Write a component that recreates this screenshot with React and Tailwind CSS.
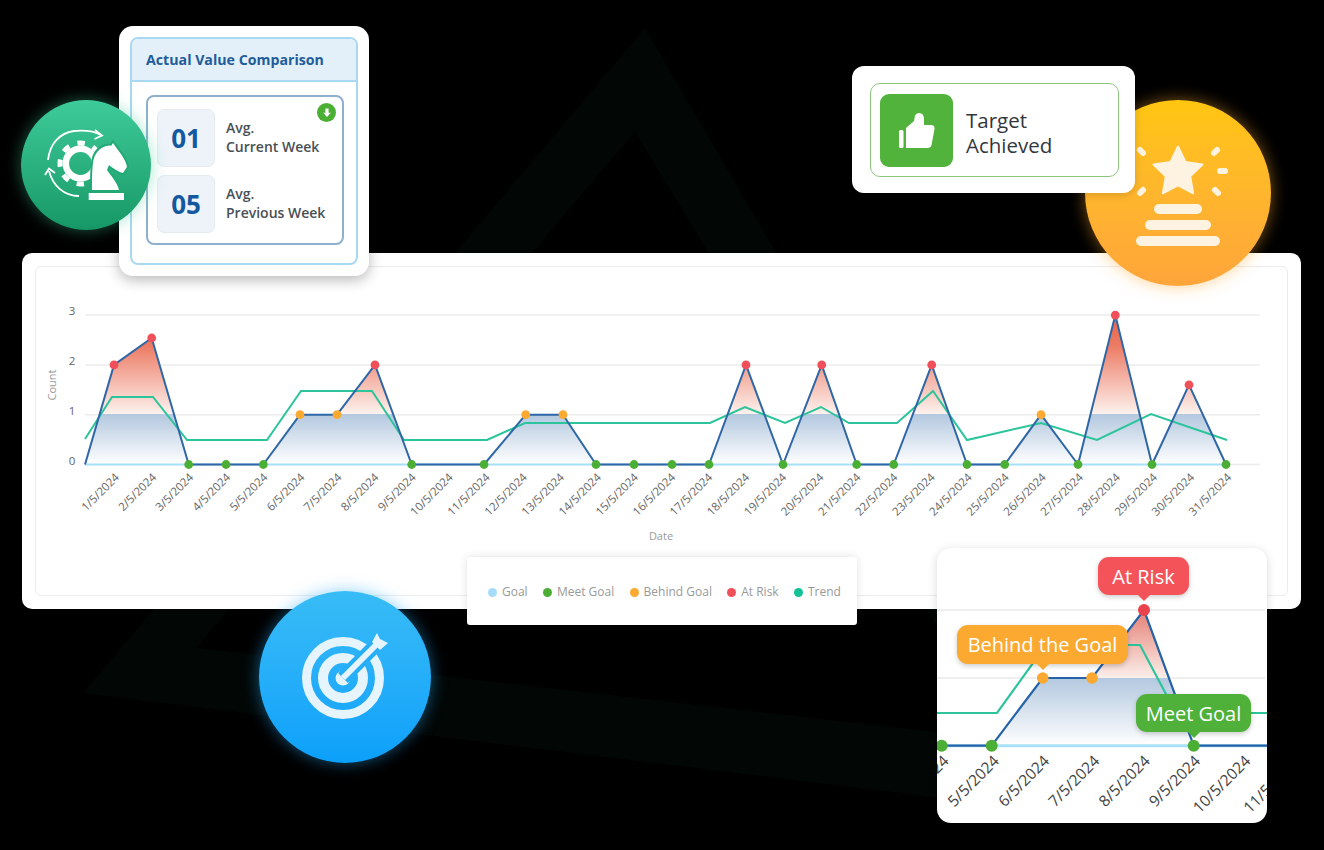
import React from "react";

// x positions of the markers, they are not perfectly even in the chart
const xs = [114, 151.7, 188.7, 226, 263.3, 300, 337, 375, 411.7, 448, 484, 525.7, 563, 596, 634, 672, 709, 746, 783, 821.7, 856.7, 893.7, 931.7, 967, 1004.7, 1041, 1078, 1115.3, 1152, 1189, 1226];
const values = [2, 2.54, 0, 0, 0, 1, 1, 2, 0, 0, 0, 1, 1, 0, 0, 0, 0, 2, 0, 2, 0, 0, 2, 0, 0, 1, 0, 3, 0, 1.6, 0];
const trend = "85,439 112,397 153,397 187,440 267,440 301,391 372,391 404,440 487,440 525,423 710,423 745,407 785,423 821,407 849,423 897,423 933,391 967,440 1041,423 1097,440 1151,414 1227,440";

const toY = (v) => 464.5 - v * 49.8;
const dotColor = (v) => (v === 0 ? "#4caf35" : v === 1 ? "#fba931" : "#f0505a");

const linePoints = "85,464.5 " + xs.map((x, i) => `${x},${toY(values[i])}`).join(" ");
const areaPoints = linePoints + " 1226,464.5";

const legend = [
  { label: "Goal", color: "bg-[#a5dcfa]" },
  { label: "Meet Goal", color: "bg-[#4caf35]" },
  { label: "Behind Goal", color: "bg-[#fba931]" },
  { label: "At Risk", color: "bg-[#f0505a]" },
  { label: "Trend", color: "bg-[#12c195]" },
];

function MainChart() {
  return (
    <svg viewBox="36 267 1251 328" className="block w-[1251px] h-[328px]">
      <defs>
        <linearGradient id="areaFill" gradientUnits="userSpaceOnUse" x1="0" y1="315" x2="0" y2="464.5">
          <stop offset="0%" stopColor="#e8654a" />
          <stop offset="20%" stopColor="#ec7a63" />
          <stop offset="66%" stopColor="#fdf1ed" />
          <stop offset="66.4%" stopColor="#b3c8df" />
          <stop offset="100%" stopColor="#ffffff" />
        </linearGradient>
      </defs>
      {[3, 2, 1, 0].map((v) => (
        <g key={v}>
          <line x1="85" x2="1260" y1={toY(v)} y2={toY(v)} stroke="#ececec" strokeWidth="1.5" />
          <text x="72" y={toY(v)} textAnchor="middle" fontSize="11.500" fill="#666">{v}</text>
        </g>
      ))}
      <text transform="translate(56 385) rotate(-90)" textAnchor="middle" fontSize="11" fill="#999">Count</text>
      <polygon points={areaPoints} fill="url(#areaFill)" />
      <line x1="85" x2="1226" y1="464.5" y2="464.5" stroke="#a8e0f8" strokeWidth="2" />
      <polyline points={trend} fill="none" stroke="#2cc49b" strokeWidth="2" />
      <polyline points={linePoints} fill="none" stroke="#2f67a6" strokeWidth="2" strokeLinejoin="round" />
      {xs.map((x, i) =>
        i === 9 ? null : <circle key={i} cx={x} cy={toY(values[i])} r="4.4" fill={dotColor(values[i])} />
      )}
      {xs.map((_, i) => {
        const lx = 120 + i * 37.07;
        return (
          <text key={i} transform={`translate(${lx} 478) rotate(-45)`} textAnchor="end" fontSize="11.500" fill="#666">
            {i + 1}/5/2024
          </text>
        );
      })}
      <text x="661" y="540" textAnchor="middle" fontSize="11" fill="#999">Date</text>
    </svg>
  );
}

function ZoomChart() {
  const days = [4, 5, 6, 7, 8, 9, 10, 11];
  const labelX = (d) => 941.7 + (d - 4) * 50.3;
  const Y = 745.7;
  return (
    <svg viewBox="937 548 330 275" className="block w-[330px] h-[275px]">
      <defs>
        <linearGradient id="zoomFill" gradientUnits="userSpaceOnUse" x1="0" y1="610" x2="0" y2="745.7">
          <stop offset="0%" stopColor="#e57f74" />
          <stop offset="49.8%" stopColor="#fbeee9" />
          <stop offset="50%" stopColor="#b3c8df" />
          <stop offset="100%" stopColor="#ffffff" />
        </linearGradient>
      </defs>
      <line x1="937" x2="1265" y1="610" y2="610" stroke="#dedede" />
      <line x1="937" x2="1265" y1="678" y2="678" stroke="#dedede" />
      <polygon points="991.7,745.7 1042.7,678 1092,678 1144,610 1193.7,745.7" fill="url(#zoomFill)" />
      <line x1="937" x2="1267" y1={Y} y2={Y} stroke="#a8e0f8" strokeWidth="3" />
      <polyline points="937,713 997,713 1046,645 1140,645 1176,713 1267,713" fill="none" stroke="#2cc49b" strokeWidth="2.2" />
      <polyline points={`937,${Y} 991.7,${Y} 1042.7,678 1092,678 1144,610 1193.7,${Y} 1267,${Y}`} fill="none" stroke="#2563a8" strokeWidth="2.2" />
      <circle cx="941.7" cy={Y} r="6" fill="#4caf35" />
      <circle cx="991.7" cy={Y} r="6" fill="#4caf35" />
      <circle cx="1193.7" cy={Y} r="6" fill="#4caf35" />
      <circle cx="1042.7" cy="678" r="5.8" fill="#fba931" />
      <circle cx="1092" cy="678" r="5.8" fill="#fba931" />
      <circle cx="1144" cy="610" r="6" fill="#e9444e" />
      {days.map((d) => (
        <text key={d} transform={`translate(${labelX(d) + 8} 762) rotate(-45)`} textAnchor="end" fontSize="15.5" fill="#444">
          {d}/5/2024
        </text>
      ))}
    </svg>
  );
}

function Callout({ className, pointer, children }) {
  return (
    <div className={`absolute flex items-center justify-center pt-[1px] rounded-[11px] text-[20px] text-white shadow-[0_2px_5px_rgba(0,0,0,0.2)] ${className}`}>
      {children}
      <span className={`absolute -bottom-[6px] left-1/2 -ml-[7px] w-0 h-0 border-x-[7px] border-x-transparent border-t-[7px] ${pointer}`} />
    </div>
  );
}

function StatRow({ value, line1, line2 }) {
  return (
    <div className="flex items-center gap-[11px]">
      <div className="flex items-center justify-center w-[58px] h-[58px] rounded-[7px] bg-[#edf3f9] border border-[#e6ebf0] text-[26px] font-bold text-[#14599f]">
        {value}
      </div>
      <div className="-mt-[3px] text-[14px] leading-[19px] font-semibold text-[#4a4f55]">
        <div>{line1}</div>
        <div>{line2}</div>
      </div>
    </div>
  );
}

function ComparisonCard() {
  return (
    <div className="absolute left-[119px] top-[26px] w-[250px] h-[250px] rounded-[14px] bg-white p-[11px] shadow-[0_4px_14px_rgba(0,0,0,0.28)]">
      <div className="h-full rounded-lg border-2 border-[#a9d8f2] overflow-hidden">
        <div className="flex items-center h-[43px] pl-[14px] pt-[1px] bg-[#e3f0f9] border-b-2 border-[#a9d8f2] text-[14.2px] font-bold text-[#1f5c99]">
          Actual Value Comparison
        </div>
        <div className="pt-[13px] pl-[14px] pr-[12px]">
          <div className="relative flex flex-col gap-2 h-[150px] pt-[12px] pl-[9px] rounded-lg border-2 border-[#8fb0cc]">
            <StatRow value="01" line1="Avg." line2="Current Week" />
            <StatRow value="05" line1="Avg." line2="Previous Week" />
            <div className="absolute right-[6px] top-[6px] flex items-center justify-center w-[19px] h-[19px] rounded-full bg-[#4caf35]">
              <svg viewBox="0 0 12 12" className="w-[12px] h-[12px]">
                <path d="M4.4 1.5h3.2v4.2h2.2L6 10 2.2 5.7h2.2z" fill="#fff" />
              </svg>
            </div>
          </div>
        </div>
      </div>
    </div>
  );
}

function GreenBadge() {
  return (
    <div className="absolute left-[21px] top-[100px] w-[130px] h-[130px] rounded-full bg-gradient-to-b from-[#3ecb9a] to-[#159866] shadow-[0_0_16px_rgba(62,200,153,0.45)]">
      <svg viewBox="21 100 130 130" className="w-[130px] h-[130px]">
        <path d="M48 160C50 143 60 133 74 131C85 130 94 131 101 135" fill="none" stroke="#fff" strokeWidth="1.8" />
        <path d="M95 130l7 5.500-7.500 3.500" fill="none" stroke="#fff" strokeWidth="1.8" />
        <path d="M79 196C64 196 53 186 49 171" fill="none" stroke="#fff" strokeWidth="1.8" />
        <path d="M45 175l4-6.500 6 4.500" fill="none" stroke="#fff" strokeWidth="1.8" />
        <circle cx="80.5" cy="163.500" r="14.700" fill="none" stroke="#fff" strokeWidth="6.500" />
        <circle cx="80.5" cy="163.500" r="20.500" fill="none" stroke="#fff" strokeWidth="5" strokeDasharray="7.500 8.600" strokeDashoffset="3.750" />
        <path d="M113 143L118 150C122 155 126 161 127 167L123 173C118 172 113 168 109 165L107 170C111 176 117 182 119 190H92C92 180 92 170 93 163C94 154 99 148 106 146C108 146 110 145 111 146Z" fill="#fff" stroke="#23a976" strokeWidth="4" paintOrder="stroke" />
        <rect x="88.700" y="193" width="35.300" height="7" fill="#fff" />
      </svg>
    </div>
  );
}

function OrangeBadge() {
  const ink = "#fdf3e0";
  return (
    <div className="absolute left-[1085px] top-[100px] w-[186px] h-[186px] rounded-full bg-gradient-to-b from-[#ffc60f] to-[#ffa53b] shadow-[0_0_16px_rgba(255,170,40,0.5)]">
      <svg viewBox="1085 100 186 186" className="w-[186px] h-[186px]">
        <path d="M1178 146.500l7.500 15.500 17 2.500-12.300 11.800 3 17-15.200-8-15.200 8 3-17-12.300-11.800 17-2.500z" fill={ink} stroke={ink} strokeWidth="2" strokeLinejoin="round" />
        <g stroke={ink} strokeWidth="6" strokeLinecap="round">
          <line x1="1214" y1="153" x2="1217" y2="150" />
          <line x1="1220" y1="171" x2="1225" y2="171" />
          <line x1="1215" y1="190" x2="1218" y2="193" />
          <line x1="1143" y1="153" x2="1140" y2="150" />
          <line x1="1143" y1="190" x2="1140" y2="193" />
        </g>
        <rect x="1154" y="204" width="48" height="10" rx="5" fill={ink} />
        <rect x="1145" y="220" width="66" height="10" rx="5" fill={ink} />
        <rect x="1136" y="236" width="84" height="10" rx="5" fill={ink} />
      </svg>
    </div>
  );
}

function BlueBadge() {
  const ink = "#e6f4fd";
  return (
    <div className="absolute left-[259px] top-[591px] w-[172px] h-[172px] rounded-full bg-gradient-to-b from-[#38bcf6] to-[#0ba0fb] shadow-[0_0_16px_rgba(40,170,250,0.5)]">
      <svg viewBox="259 591 172 172" className="w-[172px] h-[172px]">
        <circle cx="343" cy="678" r="36.500" fill="none" stroke={ink} strokeWidth="9" />
        <circle cx="343" cy="678" r="20" fill="none" stroke={ink} strokeWidth="10" />
        <circle cx="343" cy="678" r="7.500" fill={ink} />
        <line x1="343" y1="678" x2="380" y2="641" stroke="#27aef7" strokeWidth="14" />
        <line x1="343" y1="678" x2="376" y2="645" stroke={ink} strokeWidth="6" />
        <path d="M377 633l3 6 8 4-8 7-8-8z" fill={ink} />
      </svg>
    </div>
  );
}

export default function App() {
  return (
    <div className="relative w-[1324px] h-[850px] overflow-hidden bg-black font-['Open_Sans',sans-serif]">
      {/* dark logo mark in the background */}
      <svg viewBox="0 0 1324 850" className="absolute inset-0 w-[1324px] h-[850px]">
        <path d="M645 28L83 693L1106 818ZM635 132L196 648L1006 740Z" fill="#020706" fillRule="evenodd" />
      </svg>

      <div className="relative pt-[253px] pl-[22px]">
        <div className="w-[1279px] h-[356px] p-[13px] rounded-[10px] bg-white">
          <div className="h-full rounded-md border border-[#ececec]">
            <MainChart />
          </div>
        </div>
      </div>

      <div className="absolute left-[467px] top-[557px] flex items-center justify-between w-[390px] h-[68px] pt-[2px] pl-[21px] pr-[16px] rounded-[3px] bg-white shadow-[0_0_8px_rgba(0,0,0,0.12)]">
        {legend.map((item) => (
          <div key={item.label} className="flex items-center gap-[5px] text-[12px] text-[#999]">
            <span className={`w-[9px] h-[9px] rounded-full ${item.color}`} />
            {item.label}
          </div>
        ))}
      </div>

      <ComparisonCard />
      <GreenBadge />
      <OrangeBadge />
      <BlueBadge />

      <div className="absolute left-[852px] top-[66px] w-[283px] h-[127px] pt-[17px] pl-[18px] pr-[16px] rounded-xl bg-white shadow-[0_2px_8px_rgba(0,0,0,0.15)]">
        <div className="flex items-center gap-[13px] h-[94px] pl-[9px] rounded-[10px] border border-[#8cc67e]">
          <div className="w-[73px] h-[73px] rounded-[9px] bg-[#52b33c]">
            <svg viewBox="880 93 73 73" className="w-[73px] h-[73px]">
              <rect x="899" y="129" width="4.5" height="18" rx="1.5" fill="#fff" />
              <path d="M906 147V127L914 120L915 114.500Q916 112 919 112Q924 112 924 118V124H931Q935 124 934.500 128L931.500 144Q931 147 927 147Z" fill="#fff" />
            </svg>
          </div>
          <div className="pt-[5px] text-[20.5px] leading-[25px] font-medium text-[#33363b]">
            <div>Target</div>
            <div>Achieved</div>
          </div>
        </div>
      </div>

      <div className="absolute left-[937px] top-[548px] w-[330px] h-[275px] overflow-hidden rounded-[14px] bg-white shadow-[0_2px_10px_rgba(0,0,0,0.15)]">
        <ZoomChart />
        <Callout className="left-[161px] top-[9px] w-[91px] h-[38px] bg-[#f4535a]" pointer="border-t-[#f4535a]">At Risk</Callout>
        <Callout className="left-[20px] top-[77px] w-[171px] h-[39px] bg-[#fba931]" pointer="border-t-[#fba931]">Behind the Goal</Callout>
        <Callout className="left-[199px] top-[146px] w-[115px] h-[38px] bg-[#4fb03a]" pointer="border-t-[#4fb03a]">Meet Goal</Callout>
      </div>
    </div>
  );
}
